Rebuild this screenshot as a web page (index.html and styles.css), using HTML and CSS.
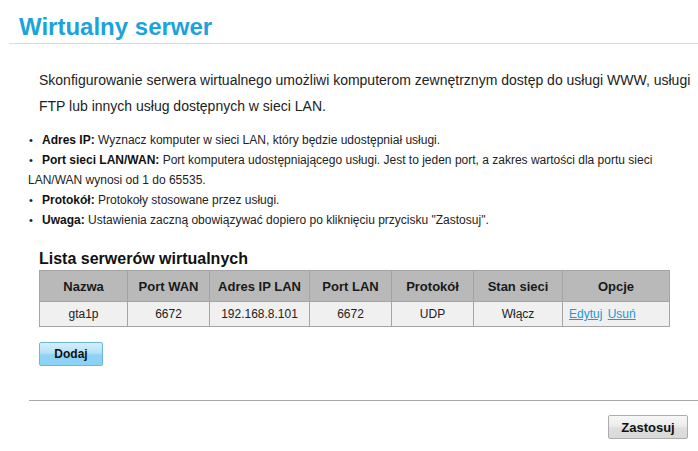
FILE: index.html
```html
<!DOCTYPE html>
<html lang="pl">
<head>
<meta charset="utf-8">
<title>Wirtualny serwer</title>
<link rel="stylesheet" href="styles.css">
</head>
<body>
<div class="header">
  <h1 class="title">Wirtualny serwer</h1>
</div>
<div class="main">
  <p class="intro">Skonfigurowanie serwera wirtualnego umożliwi komputerom zewnętrznym dostęp do usługi WWW, usługi FTP lub innych usług dostępnych w sieci LAN.</p>
  <ul class="notes">
    <li><b>Adres IP:</b> Wyznacz komputer w sieci LAN, który będzie udostępniał usługi.</li>
    <li><b>Port sieci LAN/WAN:</b> Port komputera udostępniającego usługi. Jest to jeden port, a zakres wartości dla portu sieci LAN/WAN wynosi od 1 do 65535.</li>
    <li><b>Protokół:</b> Protokoły stosowane przez usługi.</li>
    <li><b>Uwaga:</b> Ustawienia zaczną obowiązywać dopiero po kliknięciu przycisku "Zastosuj".</li>
  </ul>
  <h2 class="subtitle">Lista serwerów wirtualnych</h2>
  <table class="servers">
    <colgroup>
      <col class="c1"><col class="c2"><col class="c3"><col class="c4"><col class="c5"><col class="c6"><col class="c7">
    </colgroup>
    <thead>
      <tr><th>Nazwa</th><th>Port WAN</th><th>Adres IP LAN</th><th>Port LAN</th><th>Protokół</th><th>Stan sieci</th><th>Opcje</th></tr>
    </thead>
    <tbody>
      <tr><td>gta1p</td><td>6672</td><td>192.168.8.101</td><td>6672</td><td>UDP</td><td>Włącz</td><td class="opts"><a href="#">Edytuj</a> <a href="#">Usuń</a></td></tr>
    </tbody>
  </table>
  <div class="addrow"><button class="btn btn-add">Dodaj</button></div>
  <div class="divider"></div>
  <div class="footer"><button class="btn btn-apply">Zastosuj</button></div>
</div>
</body>
</html>
```

FILE: styles.css
```css
html, body {
  margin: 0;
  padding: 0;
  background: #fff;
}
body {
  font-family: "Liberation Sans", Arial, sans-serif;
  color: #222;
  width: 698px;
  overflow: hidden;
}
.header {
  margin-left: 9px;
  padding: 13px 0 2px 10px;
  border-bottom: 1px solid #dcdcdc;
}
.title {
  margin: 0;
  font-size: 24px;
  line-height: 28px;
  font-weight: bold;
  color: #1ba3dc;
}
.main {
  margin-left: 28px;
}
.intro {
  margin: 23px 0 0 11px;
  font-size: 14px;
  line-height: 26px;
  color: #222;
}
.notes {
  list-style: none;
  margin: 10px 0 0 0;
  padding: 0;
  font-size: 12px;
  line-height: 20px;
  color: #222;
}
.notes li {
  padding-top: 1px;
  margin-bottom: -1px;
}
.notes li::before {
  content: "\2022";
  display: inline-block;
  width: 14px;
  text-indent: 1px;
  font-size: 11px;
}
.notes b {
  color: #111;
}
.subtitle {
  margin: 20px 0 1px 11px;
  font-size: 16px;
  line-height: 20px;
  font-weight: bold;
  color: #111;
}
.servers {
  margin-left: 11px;
  width: 630px;
  table-layout: fixed;
  border-collapse: collapse;
  border: 1px solid #a4a4a4;
}
.c1 { width: 88px; }
.c2 { width: 82px; }
.c3 { width: 100px; }
.c4 { width: 82px; }
.c5 { width: 82px; }
.c6 { width: 89px; }
.c7 { width: 107px; }
.servers th, .servers td {
  border: 1px solid #a4a4a4;
  text-align: center;
  padding: 0;
}
.servers th {
  background: #b9b9b9;
  height: 30px;
  font-size: 13px;
  font-weight: bold;
  color: #1a1a1a;
}
.servers td {
  background: #f0f0f0;
  height: 24px;
  font-size: 12px;
  color: #222;
}
.servers td.opts {
  text-align: left;
  padding-left: 6px;
}
.servers a {
  color: #1a9ad6;
  text-decoration: underline;
  margin-right: 2px;
}
.addrow {
  margin: 15px 0 0 11px;
  height: 24px;
}
.btn {
  font-family: "Liberation Sans", Arial, sans-serif;
  font-weight: bold;
  color: #111;
  border-radius: 2px;
  padding: 0;
  height: 24px;
  cursor: pointer;
}
.btn-add {
  width: 64px;
  font-size: 12px;
  border: 1px solid #6fb4dc;
  background: linear-gradient(#d6effc 0%, #b2e1f9 45%, #8fd3f6 55%, #8ad2f6 100%);
}
.divider {
  margin: 34px 0 0 1px;
  border-top: 1px solid #a9a9a9;
}
.footer {
  display: flex;
  justify-content: flex-end;
  padding: 14px 10px 0 0;
}
.btn-apply {
  width: 80px;
  font-size: 13px;
  border: 1px solid #adadad;
  background: linear-gradient(#f7f7f7 0%, #ececec 45%, #dedede 55%, #d9d9d9 100%);
}
```
